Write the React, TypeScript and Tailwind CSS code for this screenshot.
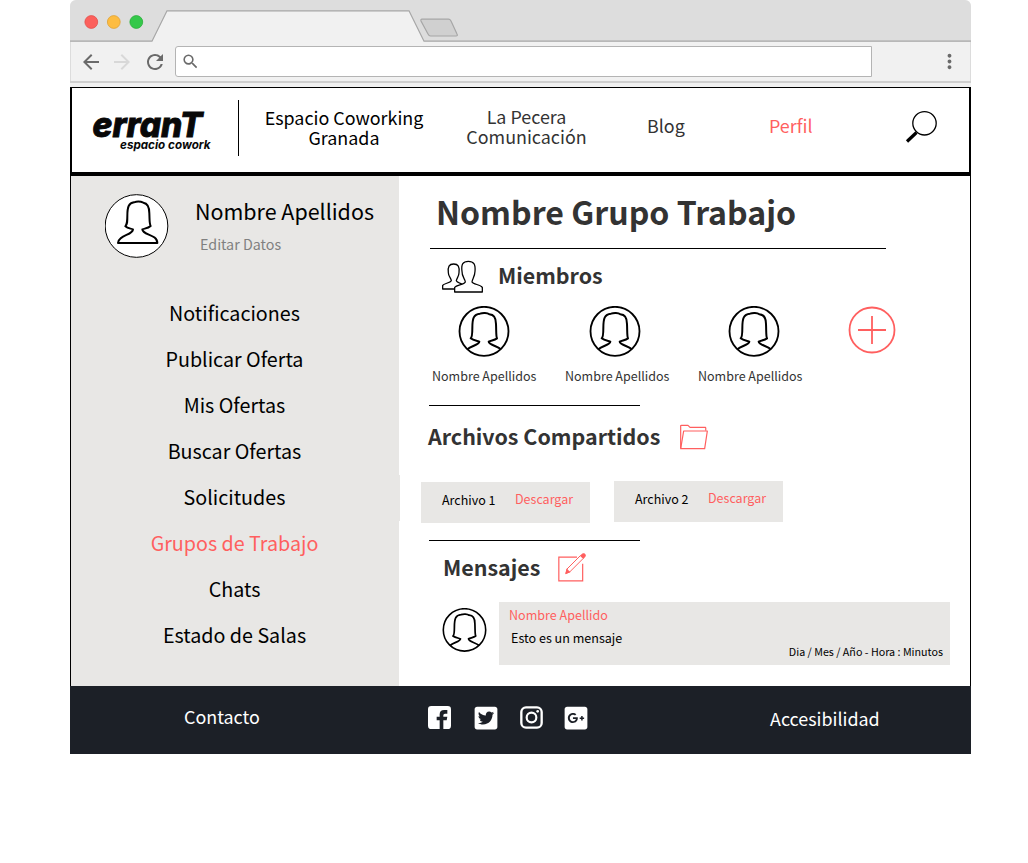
import { MdArrowBack, MdArrowForward, MdMoreVert, MdRefresh, MdSearch } from "react-icons/md";
import { FaGooglePlusSquare, FaTwitterSquare } from "react-icons/fa";

function Avatar({ className }: { className: string }) {
  return (
    <svg viewBox="0 0 156 156" className={className} fill="none" stroke="#000" strokeWidth="5.5">
      <circle cx="78" cy="76" r="73.5" fill="#fff" />
      <path
        d="M28 130 C40 119 63 117 64 107 C62 105 46 104 38 97 C43 94 43 84 43 66 C43 36 47 25 66 23 C74 20 88 20 94 25 C109 26 114 36 114 54 C115 76 114 92 117 97 C109 103 99 103 92 107 C93 117 116 119 129 130"
        strokeLinejoin="round"
        strokeWidth="6"
      />
    </svg>
  );
}

function ProfileAvatar() {
  return (
    <svg viewBox="0 0 192 192" className="mt-[18px] ml-[33.5px] h-16 w-16 shrink-0" fill="none" stroke="#000">
      <circle cx="94.500" cy="96" r="94" fill="#fff" strokeWidth="3" />
      <path
        d="M61 97 C67 90 67 84 67 66 C67 37 72 27 87 25 C97 21 107 22 115 26 C129 28 133 38 133 58 C134 80 133 90 137 96 C129 103 121 103 112 106 C113 124 157 120 157 147 L39 147 C41 122 83 124 84 106 C77 103 69 104 61 97 Z"
        strokeWidth="6"
        strokeLinejoin="round"
      />
    </svg>
  );
}

function Logo() {
  return (
    <svg viewBox="0 0 130 64" className="mt-[15px] ml-[18px] h-[64px] w-[130px] shrink-0" fill="#080808">
      <text x="2.5" y="33.5" textLength="110" lengthAdjust="spacingAndGlyphs" className="font-['Inter'] text-[34px] font-extrabold italic" stroke="#080808" strokeWidth="0.9">
        erranT
      </text>
      <text x="30" y="45.5" textLength="90.5" lengthAdjust="spacingAndGlyphs" className="font-['Inter'] text-[12px] font-bold italic">
        espacio cowork
      </text>
    </svg>
  );
}

function BrowserChrome() {
  return (
    <div className="flex h-[87px] flex-col overflow-hidden rounded-t-[6px] bg-[#f1f1f1]">
      <div className="h-[42px] bg-[#dddddd]">
        <svg viewBox="0 0 901 42" className="h-[42px] w-[901px]">
          <path d="M0 41.2H82L97 10.8H339L354 41.2H901V42H0Z" fill="#f1f1f1" />
          <path d="M0 41.2H82L97 10.8H339L354 41.2H901" fill="none" stroke="#a6a6a6" strokeWidth="1.2" />
          <path d="M352 19.2H378.500Q380 19.200 381 21L387 34Q388 36 386 36H360.500Q359 36 358 34L351 21Q350.500 19.200 352 19.200Z" fill="#d0d0d0" stroke="#a6a6a6" strokeWidth="1.2" />
          <circle cx="21.300" cy="22" r="6.400" fill="#fc605c" stroke="#e2504d" strokeWidth="0.8" />
          <circle cx="43.800" cy="22" r="6.400" fill="#fdbc40" stroke="#dea236" strokeWidth="0.8" />
          <circle cx="66.300" cy="22" r="6.400" fill="#34c84a" stroke="#2aae3a" strokeWidth="0.8" />
        </svg>
      </div>
      <div className="flex h-[39px] items-center border-x border-[#dcdcdc] text-[#6a6a6a]">
        <MdArrowBack className="ml-2 h-6 w-6" />
        <MdArrowForward className="ml-[7px] h-6 w-6 text-[#d8d8d8]" />
        <MdRefresh className="ml-[8.5px] h-6 w-6" />
        <div className="ml-[8.5px] flex h-[31px] w-[697px] items-center rounded-l-[3px] border border-[#b4b4b4] bg-white pl-[5px]">
          <MdSearch className="h-[19px] w-[19px]" />
        </div>
        <MdMoreVert className="ml-[66px] h-[23px] w-[23px]" />
      </div>
      <div className="h-[2px] bg-[#cfcfcf]" />
    </div>
  );
}

function Header() {
  return (
    <header className="flex h-[89px] items-start border-x-2 border-t border-b-4 border-black bg-white text-[17.9px] leading-5 text-[#333]">
      <Logo />
      <div className="mt-3 ml-[18px] h-14 w-px bg-black" />
      <div className="mt-[19px] ml-[24.5px] w-[161px] text-center whitespace-nowrap text-black">
        Espacio Coworking
        <br />
        Granada
      </div>
      <div className="mt-[18px] ml-[40.5px] w-[123px] text-center whitespace-nowrap">
        La Pecera
        <br />
        Comunicación
      </div>
      <div className="mt-[27px] ml-[59px] w-[122px]">Blog</div>
      <div className="mt-[27px] w-[134.500px] text-[#ff5f5f]">Perfil</div>
      <svg viewBox="0 0 34 34" className="mt-[22px] h-[34px] w-[34px]" fill="none" stroke="#000">
        <circle cx="20.500" cy="13.300" r="11.700" strokeWidth="1.300" />
        <path d="M12.500 22.500L3 31.500" strokeWidth="3.200" />
      </svg>
    </header>
  );
}

const navItems = [
  "Notificaciones",
  "Publicar Oferta",
  "Mis Ofertas",
  "Buscar Ofertas",
  "Solicitudes",
  "Grupos de Trabajo",
  "Chats",
  "Estado de Salas",
];

function Sidebar() {
  return (
    <aside className="relative w-[328px] shrink-0 bg-[#e8e7e5]">
      <div className="flex h-[114px]">
        <ProfileAvatar />
        <div className="flex flex-col whitespace-nowrap">
          <div className="mt-[20px] ml-[26.5px] text-[21.450px] leading-[30px] text-black">Nombre Apellidos</div>
          <div className="mt-[8px] ml-[31.500px] text-[14.300px] leading-5 text-[#808080]">Editar Datos</div>
        </div>
      </div>
      <nav className="flex flex-col pr-px text-center text-[19.700px] leading-[46px] text-black">
        {navItems.map((item) => (
          <div key={item} className={item === "Grupos de Trabajo" ? "text-[#ff5f5f]" : ""}>
            {item}
          </div>
        ))}
      </nav>
      <div className="absolute top-[299px] -right-px h-[46px] w-px bg-[#e8e7e5]" />
    </aside>
  );
}

function Member({ offset }: { offset: string }) {
  return (
    <div className="w-[133px]">
      <Avatar className={`h-[52px] w-[52px] ${offset}`} />
      <div className="mt-2 pl-[14px] text-[12.500px] leading-5 text-[#333]">Nombre Apellidos</div>
    </div>
  );
}

function FileCard({ name }: { name: string }) {
  return (
    <div className="flex h-[41px] w-[169px] bg-[#e8e7e5] pl-[21px] text-[12.500px] leading-5">
      <div className="mt-2 w-[73px] text-black">{name}</div>
      <div className="mt-[7px] text-[#ff5f5f]">Descargar</div>
    </div>
  );
}

function Main() {
  return (
    <main className="flex flex-1 flex-col whitespace-nowrap bg-white">
      <h1 className="h-[72px] pt-[15px] pl-[37px] text-[32.080px] leading-10 font-bold text-[#333]">Nombre Grupo Trabajo</h1>
      <div className="ml-[31px] h-px w-[456px] bg-black" />

      <section className="h-[156px]">
        <div className="flex h-[57px] pt-[11px] pl-[42px]">
          <svg viewBox="0 0 129 99" className="h-[33px] w-[43px]" fill="#fff" stroke="#000" strokeWidth="3.800" strokeLinejoin="round">
            <path d="M5 87 V76 C9 70 28 69 31 62 C31 55 22 49 22 38 C20 20 24 12 38 12 C52 12 56 20 54 38 C54 49 47 55 46 62 C47 68 60 70 68 74 V87 Z" />
            <path d="M41 96 V82 C47 75 70 74 73 66 C73 58 62 50 63 34 C60 12 66 4 82 4 C98 4 104 12 102 34 C102 50 93 58 93 66 C97 74 118 73 124 82 V96 Z" />
          </svg>
          <h2 className="ml-[14px] text-[21.400px] leading-[30px] font-bold text-[#333]">Miembros</h2>
        </div>
        <div className="flex pl-[19px]">
          <Member offset="ml-[40px]" />
          <Member offset="ml-[38px]" />
          <Member offset="ml-[44px]" />
          <svg viewBox="0 0 48 48" className="ml-[31px] h-12 w-12" fill="none" stroke="#ff5f5f" strokeWidth="1.800">
            <circle cx="24" cy="24" r="22.500" />
            <path d="M24 10V38M10 24H38" />
          </svg>
        </div>
      </section>
      <div className="ml-[30px] h-px w-[211px] bg-black" />

      <section className="h-[134px]">
        <div className="flex h-[75px] pt-[15px] pl-[29px]">
          <h2 className="w-[233px] text-[21.450px] leading-[30px] font-bold text-[#333]">Archivos Compartidos</h2>
          <svg viewBox="0 0 87 78" className="mt-[3px] ml-[18px] h-[26px] w-[29px]" fill="none" stroke="#ff5f5f" strokeWidth="3.600" strokeLinejoin="round">
            <path d="M5 72 V5 Q5 4 7 4 H27 L33 10 H79 Q81 10 80 20" />
            <path d="M5 74 L14 21 H85 L77 74 Z" />
          </svg>
        </div>
        <div className="flex pl-[22px]">
          <div className="pt-px">
            <FileCard name="Archivo 1" />
          </div>
          <div className="ml-6">
            <FileCard name="Archivo 2" />
          </div>
        </div>
      </section>
      <div className="ml-[30px] h-px w-[211px] bg-black" />

      <section className="flex flex-col">
        <div className="flex h-[61px] pt-[11px] pl-[44px]">
          <h2 className="w-[98px] text-[21.450px] leading-[30px] font-bold text-[#333]">Mensajes</h2>
          <svg viewBox="0 0 87 87" className="mt-[0.5px] ml-[16px] h-[29px] w-[29px]" fill="none" stroke="#ff5f5f" strokeWidth="3.600">
            <path d="M60 12.500H5.500V83.500H77V32" />
            <path d="M27 61L30 48L70 8L79 16L38 57Z" strokeWidth="3" />
            <path d="M27 61L30 50L37 57Z" fill="#ff5f5f" />
            <path d="M72 8L77 3Q82 1 84 5Q86 9 82 12L79 15Z" fill="#ff5f5f" />
          </svg>
        </div>
        <div className="flex">
          <Avatar className="mt-[6px] ml-[43px] h-[45px] w-[45px]" />
          <div className="ml-[12px] flex h-[63px] w-[451px] flex-col bg-[#e8e7e5] text-[12.550px] leading-5 text-black">
            <div className="mt-[3px] ml-[10px] text-[#ff5f5f]">Nombre Apellido</div>
            <div className="mt-[3px] ml-[12px]">Esto es un mensaje</div>
            <div className="-mt-[6px] pr-[7px] text-right text-[10.720px]">Dia / Mes / Año - Hora : Minutos</div>
          </div>
        </div>
      </section>
    </main>
  );
}

function Footer() {
  return (
    <footer className="flex h-[68px] items-start bg-[#1c2027] text-[17.900px] leading-5 text-white">
      <div className="mt-[20px] ml-[114px] w-[243px]">Contacto</div>
      <svg viewBox="0 0 69 69" className="mt-5 ml-px h-[23px] w-[23px]">
        <rect width="69" height="69" rx="10" fill="#fff" />
        <path d="M35 69V43H26V32H35V25Q35 12 49 12H58V23H51Q46 23 46 28V32H58L56 43H46V69Z" fill="#1c2027" />
      </svg>
      <FaTwitterSquare className="mt-[18.500px] ml-[21.500px] h-[26px] w-[26px]" />
      <svg viewBox="0 0 69 69" className="mt-5 ml-[21.500px] h-[23px] w-[23px]" fill="none" stroke="#fff">
        <rect x="4" y="4" width="61" height="61" rx="14" strokeWidth="7" />
        <circle cx="34.500" cy="34.500" r="14.500" strokeWidth="6.500" />
        <circle cx="53" cy="16" r="4" fill="#fff" stroke="none" />
      </svg>
      <FaGooglePlusSquare className="mt-[18.500px] ml-[20px] h-[26px] w-[26px]" />
      <div className="mt-[22px] ml-[181px]">Accesibilidad</div>
    </footer>
  );
}

export default function App() {
  return (
    <div className="min-h-[863px] bg-white font-['Noto_Sans_CJK_SC',sans-serif]">
      <div className="ml-[70px] w-[901px]">
        <BrowserChrome />
        <Header />
        <div className="flex h-[510px] border-x border-black">
          <Sidebar />
          <Main />
        </div>
        <Footer />
      </div>
    </div>
  );
}
